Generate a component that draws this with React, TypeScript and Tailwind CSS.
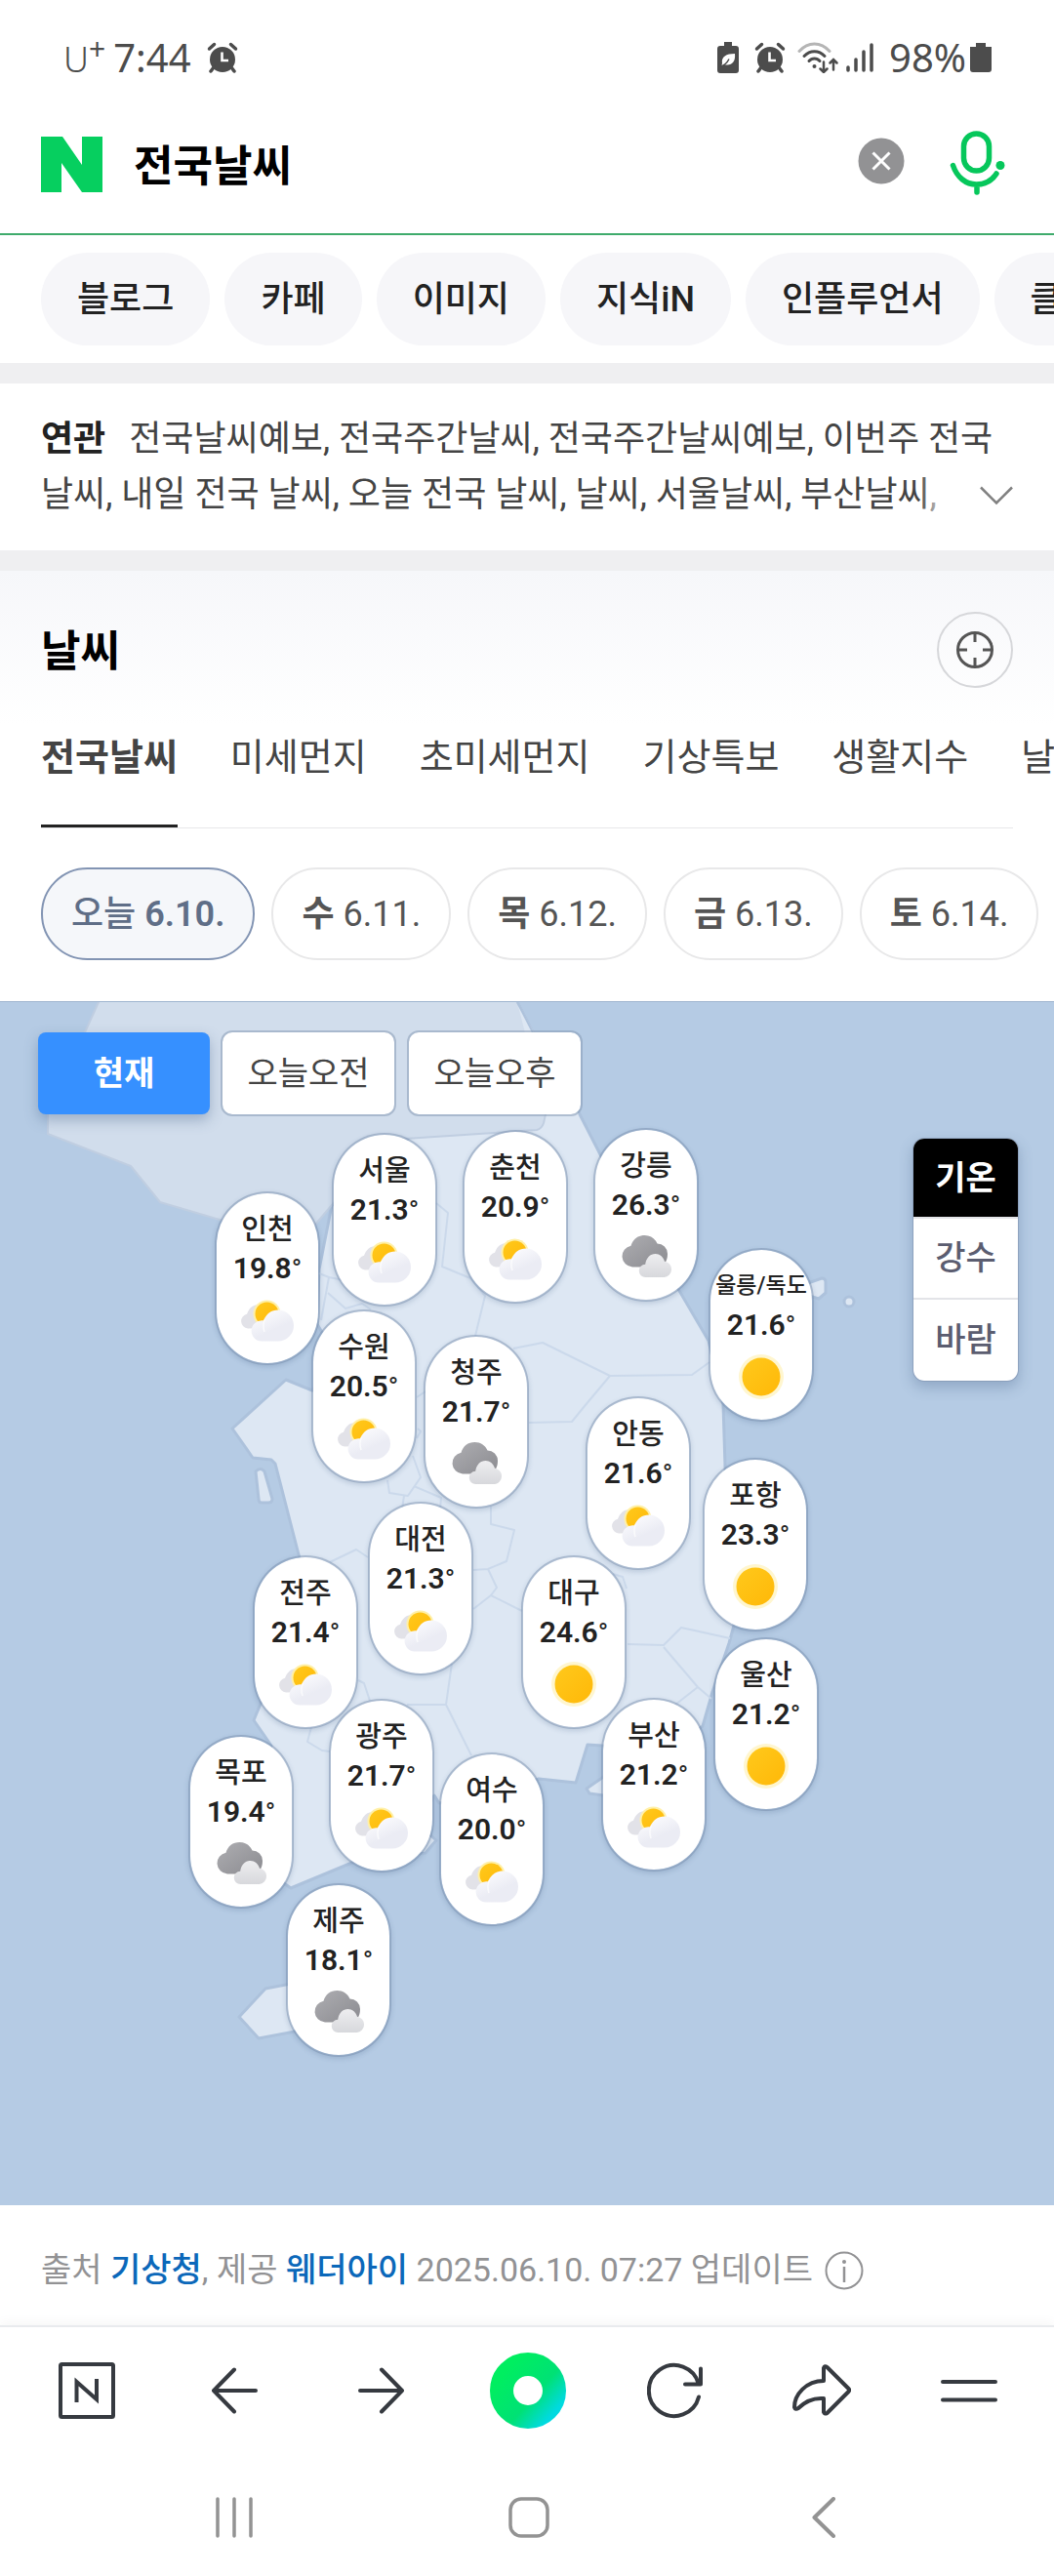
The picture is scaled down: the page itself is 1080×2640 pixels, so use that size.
import React, { useState } from 'react';

type Sky = 'partly' | 'cloudy' | 'sunny';

interface City {
  name: string;
  temp: string;
  sky: Sky;
  x: number; // center, on a 1080 wide map
  y: number; // top
}

const CATEGORIES = ['블로그', '카페', '이미지', '지식iN', '인플루언서', '클립'];

const TABS = ['전국날씨', '미세먼지', '초미세먼지', '기상특보', '생활지수', '날씨영상'];

const DAYS = [
  { day: '오늘', date: '6.10.' },
  { day: '수', date: '6.11.' },
  { day: '목', date: '6.12.' },
  { day: '금', date: '6.13.' },
  { day: '토', date: '6.14.' },
];

const TIMES = ['현재', '오늘오전', '오늘오후'];
const LAYERS = ['기온', '강수', '바람'];

const CITIES: City[] = [
  { name: '서울', temp: '21.3', sky: 'partly', x: 394, y: 134 },
  { name: '춘천', temp: '20.9', sky: 'partly', x: 528, y: 131 },
  { name: '강릉', temp: '26.3', sky: 'cloudy', x: 662, y: 129 },
  { name: '인천', temp: '19.8', sky: 'partly', x: 274, y: 194 },
  { name: '울릉/독도', temp: '21.6', sky: 'sunny', x: 780, y: 252 },
  { name: '수원', temp: '20.5', sky: 'partly', x: 373, y: 315 },
  { name: '청주', temp: '21.7', sky: 'cloudy', x: 488, y: 341 },
  { name: '안동', temp: '21.6', sky: 'partly', x: 654, y: 404 },
  { name: '포항', temp: '23.3', sky: 'sunny', x: 774, y: 467 },
  { name: '대전', temp: '21.3', sky: 'partly', x: 431, y: 512 },
  { name: '대구', temp: '24.6', sky: 'sunny', x: 588, y: 567 },
  { name: '전주', temp: '21.4', sky: 'partly', x: 313, y: 567 },
  { name: '울산', temp: '21.2', sky: 'sunny', x: 785, y: 651 },
  { name: '광주', temp: '21.7', sky: 'partly', x: 391, y: 714 },
  { name: '부산', temp: '21.2', sky: 'partly', x: 670, y: 713 },
  { name: '목포', temp: '19.4', sky: 'cloudy', x: 247, y: 751 },
  { name: '여수', temp: '20.0', sky: 'partly', x: 504, y: 769 },
  { name: '제주', temp: '18.1', sky: 'cloudy', x: 347, y: 903 },
];

const AlarmIcon = () => (
  <svg className="w-8 h-8" viewBox="0 0 32 32" fill="none" stroke="#4c4c4c" strokeLinecap="round">
    <circle cx="16" cy="18" r="13" fill="#4c4c4c" stroke="none" />
    <path d="M2.500 7 7.500 2.500M29.500 7 24.500 2.500" strokeWidth="3.500" />
    <path d="M7 26 4 30M25 26l3 4" strokeWidth="3.500" />
    <path d="M15.500 10.500v8.500h6.500" stroke="#fff" strokeWidth="2.600" strokeLinecap="butt" />
  </svg>
);

const StatusBar = () => (
  <div className="flex h-[118px] items-center justify-between pl-[65px] pr-[64px] font-['Noto_Sans',sans-serif] text-[40px] leading-none text-[#4c4c4c]">
    <div className="flex items-center">
      <span className="flex items-start">
        <span className="pt-1 text-[36px] font-light">U</span>
        <span className="-mt-1 text-[30px]">+</span>
      </span>
      <span className="ml-2">7:44</span>
      <span className="ml-4"><AlarmIcon /></span>
    </div>
    <div className="flex items-center">
      <svg className="h-8 w-[22px]" viewBox="0 0 22 32">
        <path d="M7 0h8v4h4a3 3 0 0 1 3 3v22a3 3 0 0 1-3 3H3a3 3 0 0 1-3-3V7a3 3 0 0 1 3-3h4z" fill="#4c4c4c" />
        <path d="M5 22c-1-7 4-10 13-10 1 9-4 13-11 11l-3 2" fill="#fff" />
        <path d="M3 24.500c4 0 7-3 9-7" fill="none" stroke="#4c4c4c" strokeWidth="1.500" />
      </svg>
      <span className="ml-4"><AlarmIcon /></span>
      <svg className="ml-3 h-8 w-[42px]" viewBox="0 0 42 32" fill="none" stroke="#4c4c4c" strokeWidth="3" strokeLinecap="round">
        <path d="M2 9.500C11-.500 24-.500 33 9.500" stroke="#b5b5b5" />
        <path d="M7 14.500c6-6.500 15-6.500 21 0M12 19.500c3-3.500 8-3.500 11 0" />
        <circle cx="17.500" cy="25" r="2" fill="#4c4c4c" stroke="none" />
        <path d="M27 20.500v10M23.500 27.500l3.500 3.500 3.500-3.500M37 28.500v-10M33.500 21.500l3.500-3.500 3.500 3.500" strokeWidth="2.500" />
      </svg>
      <svg className="ml-2 h-8 w-7" viewBox="0 0 28 32" stroke="#4c4c4c" strokeWidth="3.500" strokeLinecap="round">
        <path d="M2 26v3M10 18v11M18 10v19M26 3v26" />
      </svg>
      <span className="ml-4">98%</span>
      <svg className="ml-1 h-8 w-[22px]" viewBox="0 0 22 32">
        <path d="M6 1h10v4h6v23a3 3 0 0 1-3 3H3a3 3 0 0 1-3-3V5h6z" fill="#4c4c4c" />
      </svg>
    </div>
  </div>
);

const SearchBar = () => {
  const [query, setQuery] = useState('전국날씨');

  return (
    <form className="flex h-[123px] items-center border-b-2 border-[#3fab6c] pb-5 pl-[42px] pr-[50px]" onSubmit={(e) => e.preventDefault()}>
      <a href="#home" aria-label="NAVER">
        <svg className="h-[57px] w-[63px]" viewBox="0 0 63 57">
          <path d="M0 0h22l20 29V0h21v57H42L21 27v30H0z" fill="#06cf5f" />
        </svg>
      </a>
      <input
        type="text"
        aria-label="검색어"
        value={query}
        onChange={(e) => setQuery(e.target.value)}
        className="ml-[32px] h-16 min-w-0 flex-1 bg-transparent pt-1 text-[44px] font-bold text-black outline-none"
      />
      <button type="button" aria-label="지우기" onClick={() => setQuery('')} className="mr-[46px] pb-2">
        <svg className="h-12 w-12" viewBox="0 0 48 48">
          <circle cx="24" cy="24" r="23.500" fill="#929294" />
          <path d="M15.500 15.500l17 17M32.500 15.500l-17 17" stroke="#fff" strokeWidth="3" />
        </svg>
      </button>
      <button type="button" aria-label="음성검색" className="pb-1">
        <svg className="h-[66px] w-[57px]" viewBox="0 0 57 66" fill="none" stroke="#06c75b" strokeWidth="5.500" strokeLinecap="round">
          <rect x="14.500" y="3" width="26" height="38" rx="13" />
          <path d="M3.500 35.500c4 12 13 19.500 24 19.500 9 0 16-4 20.500-11M28 55v8" />
          <circle cx="52" cy="35.500" r="4.500" fill="#06c75b" stroke="none" />
        </svg>
      </button>
    </form>
  );
};

const SkyIcon: React.FC<{ sky: Sky }> = ({ sky }) => {
  if (sky === 'sunny') {
    return (
      <svg className="h-[46px] w-[54px]" viewBox="0 0 54 46">
        <circle cx="27" cy="23" r="23" fill="#fff6cf" />
        <circle cx="27" cy="23" r="19.500" fill="url(#sun)" />
      </svg>
    );
  }
  if (sky === 'cloudy') {
    return (
      <svg className="h-[46px] w-[54px]" viewBox="-2 -1 54 46">
        <path
          d="M11 32.500A11 11 0 0 1 9.500 10.700C11.500 4 16.500 0 23.500 0 29.500 0 34 3 36.500 8.500A10.500 10.500 0 0 1 47 19c0 8-4 13.500-11 13.500z"
          fill="url(#darkCloud)"
        />
        <path
          d="M24.500 43a6.600 6.600 0 0 1-.300-13.200C25 23 29.500 19 34.500 19c4.500 0 8 3 9.500 7.700A8.200 8.200 0 0 1 43.500 43z"
          fill="url(#lightCloud)"
        />
      </svg>
    );
  }
  return (
    <svg className="h-[46px] w-[54px]" viewBox="0 -3 54 46">
      <path d="M7 28.500A7.500 7.500 0 0 1 6 13.700C8 8 12 4 18 4l8 24z" fill="#e2e2e8" />
      <circle cx="26.500" cy="13.500" r="14" fill="#fff0a8" />
      <circle cx="26.500" cy="13.500" r="12" fill="url(#sun)" />
      <path
        d="M21 41.500A10.600 10.600 0 1 1 21.500 20.200h1.500C26 13.500 31 9.500 38 9.500a16 16 0 0 1 0 32z"
        fill="url(#whiteCloud)"
      />
      <path d="M24 32c-2-6-1.500-9 .500-13" fill="none" stroke="#fff" strokeWidth="1.500" opacity=".7" />
    </svg>
  );
};

const MapShapes = () => (
  <svg className="absolute inset-0 h-full w-full" viewBox="0 1026 1080 1234" preserveAspectRatio="xMidYMin slice" aria-hidden="true">
    <defs>
      <linearGradient id="sun" x1="0" y1="0" x2="1" y2="1">
        <stop offset="0" stopColor="#ffc91c" />
        <stop offset="1" stopColor="#ffb808" />
      </linearGradient>
      <linearGradient id="darkCloud" x1="0" y1="0" x2="1" y2="1">
        <stop offset="0" stopColor="#aeaeb2" />
        <stop offset="1" stopColor="#8b8b90" />
      </linearGradient>
      <linearGradient id="lightCloud" x1="0" y1="0" x2="0" y2="1">
        <stop offset="0" stopColor="#eeeef0" />
        <stop offset="1" stopColor="#d7d8dc" />
      </linearGradient>
      <linearGradient id="whiteCloud" x1="0" y1="0" x2=".6" y2="1">
        <stop offset="0.200" stopColor="#fafafd" />
        <stop offset="0.700" stopColor="#ebecf4" />
      </linearGradient>
    </defs>
    <g fill="#dde7f3" stroke="#adc2dc" strokeWidth="3" strokeLinejoin="round">
      {/* mainland */}
      <path d="M340 1234L418 1166L530 1026L546 1057L594 1141L615 1182L695 1320L726 1373L741 1438L743 1502L752 1665L747 1683L730 1733L720 1768L680 1800L617 1788L602 1787L590 1826L552 1822L500 1840L450 1847L445 1839L430 1870L447 1885L436 1898L363 1907L298 1934L291 1929L240 1850L278 1788L260 1762L267 1745L307 1596L282 1499L278 1495L259 1493L238 1463L293 1413L320 1424L345 1390L325 1356L327 1300z" />
      <path d="M262 1507q5-5 9 0l8 28q0 4-4 4h-7q-3 0-3-4z" />
      <path d="M825 1315L842 1309q4 0 4 4v11l-7 6-10-3z" />
      <circle cx="870" cy="1333" r="5" />
      <path d="M245 2066L272 2037L340 2024L350 2072L265 2088z" />
      <path d="M640 1805L601 1832L604 1837L640 1842z" />
      {/* northern part */}
      <path d="M90 1000L101 1026L87 1057L49 1141V1161L134 1194L164 1231L225 1249L323 1254L340 1234L400 1167L550 1157Q555 1156 557 1150L559 1141L546 1057L530 1026L500 1000z" fill="#d1ddec" stroke="#c0cee1" strokeWidth="2" />
    </g>
    <path d="M530 1026L594 1141L559 1141z" fill="#dde7f3" />
    <path d="M530 1026L546 1057L594 1141" fill="none" stroke="#adc2dc" strokeWidth="2" />
    <g fill="none" stroke="#cbd9eb" strokeWidth="2" strokeLinejoin="round">
      <path d="M447 1232L459 1242L453 1297L482 1309L497 1327L487 1368" />
      <path d="M526 1381L556 1375L625 1409L709 1408L727 1395M625 1409L599 1440L586 1456L542 1457" />
      <path d="M327 1304L337 1308L329 1352M337 1308L352 1311M336 1324L354 1340L371 1335L380 1341" />
      <path d="M427 1431L436 1425M428 1463L431 1466L427 1473M423 1491L431 1513L418 1532L399 1529L397 1516M424 1522L452 1534L451 1545M414 1532L412 1545" />
      <path d="M503 1543V1561L527 1567L519 1599L500 1607L485 1608M500 1607L509 1626L503 1634L485 1648M503 1634L535 1650" />
      <path d="M338 1600L365 1587L377 1595M463 1704L457 1746L483 1798M457 1746H417M367 1721L373 1724L379 1742M319 1769L315 1784L330 1793L338 1794" />
      <path d="M628 1612L638 1615L642 1627M643 1684L680 1685L698 1667L748 1678M680 1687L715 1728L729 1740M715 1728L692 1746" />
    </g>
  </svg>
);

const WeatherMap = () => {
  const [time, setTime] = useState('현재');
  const [layer, setLayer] = useState('기온');

  return (
    <div className="relative h-[1234px] overflow-hidden border-t border-[#9fb5d0] bg-[#b5cbe4]">
      <MapShapes />

      {CITIES.map((city) => (
        <a
          key={city.name}
          href="#city"
          className="absolute -ml-[54px] flex h-[178px] w-[108px] flex-col items-center rounded-full border-2 border-[#7389a8]/45 bg-white bg-clip-padding pt-[19px] whitespace-nowrap text-[#222] shadow-[0_2px_5px_rgba(60,90,130,0.2)]"
          style={{ left: `${(city.x / 1080) * 100}%`, top: city.y }}
        >
          <span className={city.name.length > 2 ? 'text-[23px] leading-9 font-medium' : 'text-[29px] leading-9 font-medium'}>
            {city.name}
          </span>
          <span className="text-[30px] leading-[44px] font-semibold">
            {city.temp}
            <span className="text-[28px] leading-none font-normal">°</span>
          </span>
          <span className="mt-2"><SkyIcon sky={city.sky} /></span>
        </a>
      ))}

      <div className="absolute top-[29px] left-[39px] flex items-center gap-[11px] text-[34px]">
        {TIMES.map((item) => (
          <button
            key={item}
            type="button"
            onClick={() => setTime(item)}
            className={
              item === time
                ? 'h-[84px] w-[176px] rounded-lg bg-[#3690ff] font-bold text-white shadow-[0_6px_14px_rgba(60,90,130,0.35)]'
                : 'h-[88px] w-[180px] rounded-xl border-2 border-[#8295b0]/50 bg-white bg-clip-padding text-[#444]'
            }
          >
            {item}
          </button>
        ))}
      </div>

      <div className="absolute top-[139px] right-[36px] w-[109px] divide-y-2 divide-[#e3e4e8] overflow-hidden rounded-xl border border-[#8295b0]/60 bg-white bg-clip-padding text-[34px] shadow-[0_6px_14px_rgba(60,90,130,0.3)]">
        {LAYERS.map((item) => (
          <button
            key={item}
            type="button"
            onClick={() => setLayer(item)}
            className={item === layer ? 'block h-[82px] w-full bg-black font-bold text-white' : 'block h-[83px] w-full font-medium text-[#5b5d70]'}
          >
            {item}
          </button>
        ))}
      </div>
    </div>
  );
};

const BottomNav = () => (
  <nav className="border-t-2 border-[#e9ebee] bg-white shadow-[0_-4px_10px_rgba(0,0,0,0.03)]">
    <div className="grid h-[130px] grid-cols-7 items-center justify-items-center pl-[14px] pr-3">
      <button type="button" aria-label="네이버 홈">
        <svg className="h-[58px] w-[58px]" viewBox="0 0 58 58" fill="none" stroke="#363a40" strokeWidth="4" strokeLinejoin="round">
          <rect x="2" y="2" width="54" height="54" rx="1.500" />
          <path d="M18.500 39V20L39 38V19" strokeLinecap="square" strokeLinejoin="miter" />
        </svg>
      </button>
      <button type="button" aria-label="뒤로">
        <svg className="h-12 w-12" viewBox="0 0 48 48" fill="none" stroke="#363a40" strokeWidth="4" strokeLinecap="round" strokeLinejoin="round">
          <path d="M24 2.500L3 24l21 21.500M3 24h43" />
        </svg>
      </button>
      <button type="button" aria-label="앞으로">
        <svg className="h-12 w-12" viewBox="0 0 48 48" fill="none" stroke="#363a40" strokeWidth="4" strokeLinecap="round" strokeLinejoin="round">
          <path d="M25 2.500L46 24 25 45.500M46 24H3" />
        </svg>
      </button>
      <button type="button" aria-label="그린닷">
        <svg className="h-[78px] w-[78px]" viewBox="0 0 78 78">
          <defs>
            <linearGradient id="dot" x1=".1" y1=".1" x2="1" y2=".9">
              <stop offset="0" stopColor="#00ee60" />
              <stop offset="0.600" stopColor="#00e175" />
              <stop offset="1" stopColor="#00dae0" />
            </linearGradient>
          </defs>
          <circle cx="39" cy="39" r="27" fill="none" stroke="url(#dot)" strokeWidth="24" />
        </svg>
      </button>
      <button type="button" aria-label="새로고침">
        <svg className="h-[58px] w-[58px]" viewBox="0 0 58 58" fill="none" stroke="#363a40" strokeWidth="4" strokeLinecap="round" strokeLinejoin="round">
          <path d="M53 35.500A26 26 0 1 1 53 22.500M55 6.500v16H39" />
        </svg>
      </button>
      <button type="button" aria-label="공유">
        <svg className="h-[58px] w-[60px]" viewBox="0 0 60 58" fill="none" stroke="#363a40" strokeWidth="4" strokeLinejoin="round">
          <path d="M32 19V6q1-3 3.500-1L57.500 27q1.500 1.500 0 3L35.500 52q-2.500 1.500-3.500-1V37C20 36 12 41 6 47q-3 2-4-1C2 33 14 19 32 19z" />
        </svg>
      </button>
      <button type="button" aria-label="메뉴">
        <svg className="h-[58px] w-[58px]" viewBox="0 0 58 58" stroke="#363a40" strokeWidth="4" strokeLinecap="round">
          <path d="M2 20h54M2 38.500h54" />
        </svg>
      </button>
    </div>
    <div className="grid h-[126px] grid-cols-3 items-center justify-items-center pt-1 pl-[89px] pr-[85px]">
      <button type="button" aria-label="최근 앱">
        <svg className="h-[42px] w-[42px]" viewBox="0 0 42 42" stroke="#939393" strokeWidth="3.500" strokeLinecap="round">
          <path d="M4 2v38M21 2v38M38 2v38" />
        </svg>
      </button>
      <button type="button" aria-label="홈 화면">
        <svg className="h-[42px] w-[42px]" viewBox="0 0 42 42" fill="none" stroke="#939393" strokeWidth="3.500">
          <rect x="2" y="2" width="38" height="38" rx="11" />
        </svg>
      </button>
      <button type="button" aria-label="이전 화면">
        <svg className="h-[42px] w-[42px]" viewBox="0 0 42 42" fill="none" stroke="#939393" strokeWidth="4" strokeLinecap="round" strokeLinejoin="round">
          <path d="M31 2L11.500 21 31 40" />
        </svg>
      </button>
    </div>
  </nav>
);

export default function App() {
  const [tab, setTab] = useState('전국날씨');
  const [day, setDay] = useState('오늘');

  return (
    <div className="overflow-x-hidden bg-white font-[Roboto,'Noto_Sans_CJK_KR',sans-serif] text-[#222]">
      <header>
        <StatusBar />
        <SearchBar />
        <nav className="flex gap-[15px] overflow-hidden py-[18px] pl-[42px] whitespace-nowrap">
          {CATEGORIES.map((name) => (
            <a key={name} href="#category" className="flex h-[95px] shrink-0 items-center rounded-full bg-[#f6f6f9] px-[37px] text-[36px] font-medium">
              {name}
            </a>
          ))}
        </nav>
      </header>

      {/* Related keywords */}
      <section className="relative border-y-[21px] border-[#efeff1] px-[42px] pt-[29px] pb-7">
        <p className="text-[36px] leading-[57px] break-keep text-[#444]">
          <b className="mr-6 text-[#222]">연관</b>
          전국날씨예보, 전국주간날씨, 전국주간날씨예보, 이번주 전국 날씨, 내일 전국 날씨, 오늘 전국 날씨, 날씨, 서울날씨, 부산날씨,
        </p>
        <button type="button" aria-label="펼치기" className="absolute right-[42px] bottom-7 flex h-[57px] w-[96px] items-center justify-end bg-linear-to-r from-white/0 to-white to-30%">
          <svg className="h-5 w-[34px]" viewBox="0 0 34 20" fill="none" stroke="#808080" strokeWidth="2.500">
            <path d="M1 1.500l16 16 16-16" />
          </svg>
        </button>
      </section>

      {/* Weather */}
      <main>
        <div className="bg-linear-to-b from-[#f6f7fa] to-white to-60% pt-[42px]">
          <div className="flex h-[78px] items-center justify-between px-[42px]">
            <h2 className="pt-1 text-[44px] leading-none font-bold text-black">날씨</h2>
            <button type="button" aria-label="현재 위치" className="flex h-[78px] w-[78px] items-center justify-center rounded-full border-2 border-[#d6d7da]">
              <svg className="h-10 w-10" viewBox="0 0 40 40" fill="none" stroke="#555" strokeWidth="3">
                <circle cx="20" cy="20" r="17.500" />
                <path d="M20 2v10M20 28v10M2 20h10M28 20h10" />
              </svg>
            </button>
          </div>
          <div className="mt-[42px] flex gap-[54px] overflow-hidden pl-[42px] text-[38px] leading-[58px] whitespace-nowrap text-[#444]">
            {TABS.map((name) => (
              <button
                key={name}
                type="button"
                onClick={() => setTab(name)}
                className={
                  name === tab
                    ? 'shrink-0 border-b-[3px] border-[#222] pb-10 font-bold'
                    : 'shrink-0 border-b-[3px] border-transparent pb-10'
                }
              >
                {name}
              </button>
            ))}
          </div>
          <div className="mx-[42px] h-px bg-[#e8e8ea]" />
        </div>

        <div className="flex gap-[17px] overflow-hidden pt-10 pb-[42px] pl-[42px] whitespace-nowrap">
          {DAYS.map((item) => (
            <button
              key={item.day}
              type="button"
              onClick={() => setDay(item.day)}
              className={
                item.day === day
                  ? 'h-[95px] shrink-0 rounded-full border-2 border-[#8294b3] bg-[#f5f7fa] px-[29px] text-[36px] font-semibold text-[#5f6e87]'
                  : 'h-[95px] shrink-0 rounded-full border-2 border-[#e8e8e9] px-[29px] text-[36px] text-[#555]'
              }
            >
              <b className={item.day === day ? 'font-medium' : 'font-bold'}>{item.day}</b> {item.date}
            </button>
          ))}
        </div>

        <WeatherMap />

        <p className="flex h-[123px] items-center px-[42px] pt-2.5 text-[34px] whitespace-pre text-[#929294]">
          출처 <a href="#kma" className="font-medium text-[#0b68ba]">기상청</a>, 제공 <a href="#weatheri" className="font-medium text-[#0b68ba]">웨더아이</a> 2025.06.10. 07:27 업데이트
          <svg className="ml-3 h-10 w-10" viewBox="0 0 40 40" fill="none" stroke="#929294" strokeWidth="2">
            <circle cx="20" cy="20" r="18.500" />
            <path d="M20 16v16" strokeWidth="2.500" />
            <circle cx="20" cy="11" r="2" fill="#929294" stroke="none" />
          </svg>
        </p>
      </main>

      <BottomNav />
    </div>
  );
}
